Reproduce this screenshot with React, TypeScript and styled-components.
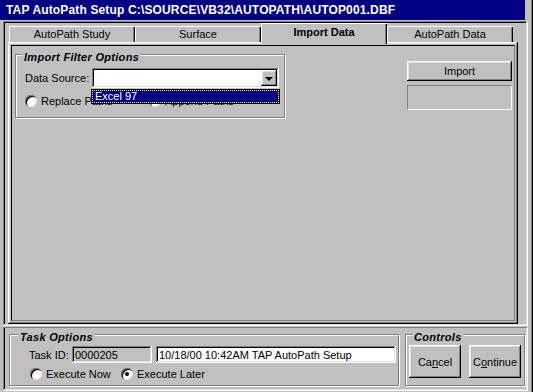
import React from 'react';
import styled, { createGlobalStyle, css } from 'styled-components';

const GlobalStyle = createGlobalStyle`
  html, body {
    margin: 0;
    padding: 0;
    background: #c0c0c0;
  }
  body {
    font-family: "Liberation Sans", Arial, sans-serif;
    font-size: 11px;
    color: #000;
  }
`;

const raised = css`
  box-shadow: inset -1px -1px #000, inset 1px 1px #fff, inset -2px -2px #808080, inset 2px 2px #dfdfdf;
`;

const sunken = css`
  box-shadow: inset -1px -1px #fff, inset 1px 1px #808080, inset -2px -2px #dfdfdf, inset 2px 2px #000;
`;

const Window = styled.div`
  width: 533px;
  height: 392px;
  box-sizing: border-box;
  padding-right: 5px;
  display: flex;
  flex-direction: column;
  background: #c0c0c0;
  box-shadow: inset -1px 0 #000, inset -2px 0 #808080;
  overflow: hidden;
`;

const TitleBar = styled.div`
  height: 20px;
  margin-right: 3px;
  padding-left: 6px;
  background: #000080;
  color: #fff;
  font-weight: bold;
  font-size: 12px;
  letter-spacing: 0.15px;
  line-height: 21px;
  white-space: nowrap;
`;

const MainFrame = styled.div`
  margin: 1px 0 0 3px;
  height: 305px;
  box-sizing: border-box;
  padding: 2px 10px 2px 5px;
  display: flex;
  flex-direction: column;
  ${sunken}
`;

const TabRow = styled.div`
  display: flex;
  height: 19px;
  padding-left: 1px;
  align-items: flex-end;
`;

const Tab = styled.div<{ $active?: boolean }>`
  width: 126px;
  height: ${({ $active }) => ($active ? '21px' : '16px')};
  margin-bottom: ${({ $active }) => ($active ? '-2px' : '0')};
  position: relative;
  z-index: ${({ $active }) => ($active ? 1 : 0)};
  box-sizing: border-box;
  background: #c0c0c0;
  display: flex;
  align-items: center;
  justify-content: center;
  padding-bottom: ${({ $active }) => ($active ? '3px' : '0')};
  font-weight: ${({ $active }) => ($active ? 'bold' : 'normal')};
  font-size: 11px;
  box-shadow: inset 1px 1px #fff, inset -1px 0 #000, inset -2px 0 #808080;
`;

const TabPanel = styled.div`
  flex: 1;
  box-sizing: border-box;
  padding: 2px;
  display: flex;
  ${raised}
`;

const Content = styled.div`
  flex: 1;
  margin: 1px;
  border: 1px solid;
  border-color: #000 #808080 #808080 #000;
  display: flex;
  align-items: flex-start;
`;

const Group = styled.fieldset<{ $width: number; $height: number }>`
  margin: 0;
  padding: 0;
  width: ${({ $width }) => $width}px;
  height: ${({ $height }) => $height}px;
  box-sizing: border-box;
  border: 1px solid #808080;
  box-shadow: inset 1px 1px #fff, 1px 1px #fff;
  min-inline-size: 0;
`;

const Legend = styled.legend<{ $indent?: number }>`
  margin-left: ${({ $indent }) => $indent ?? 6}px;
  padding: 0 2px;
  background: #c0c0c0;
  font-weight: 900;
  font-style: italic;
  font-size: 11px;
  letter-spacing: 0.3px;
  line-height: 14px;
  position: relative;
  top: 3px;
`;

const GroupBody = styled.div<{ $pad: string; $row?: boolean; $gap?: number }>`
  padding: ${({ $pad }) => $pad};
  display: flex;
  flex-direction: ${({ $row }) => ($row ? 'row' : 'column')};
  gap: ${({ $gap }) => $gap ?? 0}px;
`;

const Row = styled.div<{ $top?: number; $left?: number }>`
  display: flex;
  align-items: center;
  margin-top: ${({ $top }) => $top ?? 0}px;
  margin-left: ${({ $left }) => $left ?? 0}px;
`;

const FieldLabel = styled.span<{ $width: number }>`
  width: ${({ $width }) => $width}px;
  white-space: nowrap;
`;

const Combo = styled.div`
  position: relative;
  width: 187px;
  height: 20px;
  box-sizing: border-box;
  background: #fff;
  display: flex;
  justify-content: flex-end;
  align-items: center;
  padding-right: 2px;
  ${sunken}
`;

const DropButton = styled.div`
  width: 16px;
  height: 16px;
  background: #c0c0c0;
  display: flex;
  align-items: center;
  justify-content: center;
  ${raised}
`;

const Arrow = styled.span`
  width: 0;
  height: 0;
  border-left: 4px solid transparent;
  border-right: 4px solid transparent;
  border-top: 4px solid #000;
  margin-top: 1px;
`;

const DropList = styled.div`
  position: absolute;
  top: 21px;
  left: -1px;
  width: 189px;
  height: 15px;
  box-sizing: border-box;
  border: 1px solid #000;
  background: #000080;
  z-index: 2;
`;

const DropItem = styled.div`
  height: 13px;
  box-sizing: border-box;
  outline: 1px dotted #ffff80;
  outline-offset: -1px;
  color: #fff;
  padding-left: 3px;
  line-height: 13px;
  font-size: 11px;
`;

const RadioItem = styled.label<{ $width?: number }>`
  display: flex;
  align-items: center;
  gap: 4px;
  width: ${({ $width }) => ($width ? `${$width}px` : 'auto')};
  white-space: nowrap;
`;

const RadioCircle = styled.span<{ $checked?: boolean }>`
  width: 12px;
  height: 12px;
  border-radius: 50%;
  background: #fff;
  flex: none;
  position: relative;
  box-shadow: inset 1px 1px 0 #808080, inset 2px 2px 0 #000, inset -1px -1px 0 #dfdfdf;
  &::after {
    content: '';
    display: ${({ $checked }) => ($checked ? 'block' : 'none')};
    position: absolute;
    left: 4px;
    top: 4px;
    width: 4px;
    height: 4px;
    border-radius: 50%;
    background: #000;
  }
`;

const RightCol = styled.div`
  margin: 15px 2px 0 auto;
  width: 105px;
  display: flex;
  flex-direction: column;
  gap: 4px;
`;

const Button = styled.button<{ $width: number; $height: number }>`
  width: ${({ $width }) => $width}px;
  height: ${({ $height }) => $height}px;
  border: none;
  padding: 0;
  background: #c0c0c0;
  font-family: "Liberation Sans", Arial, sans-serif;
  font-size: 11px;
  color: #000;
  ${raised}
`;

const StatusBox = styled.div`
  height: 25px;
  border: 1px solid;
  border-color: #808080 #fff #fff #808080;
  box-sizing: border-box;
`;

const BottomFrame = styled.div`
  margin: 1px 0 1px 3px;
  flex: 1;
  box-sizing: border-box;
  padding: 0 3px 0 6px;
  display: flex;
  gap: 6px;
  box-shadow: inset -1px -1px #fff, inset 1px 1px #808080, inset -2px -2px #dfdfdf, inset 2px 0 #000;
`;

const TextBox = styled.div<{ $width: number; $bg: string }>`
  width: ${({ $width }) => $width}px;
  height: 17px;
  box-sizing: border-box;
  background: ${({ $bg }) => $bg};
  padding: 2px 3px 0;
  font-size: 11px;
  line-height: 14px;
  white-space: nowrap;
  overflow: hidden;
  ${sunken}
`;

const Spacer = styled.span<{ $width: number }>`
  width: ${({ $width }) => $width}px;
  flex: none;
`;

export default function App() {
  return (
    <>
      <GlobalStyle />
      <Window>
        <TitleBar>TAP AutoPath Setup C:\SOURCE\VB32\AUTOPATH\AUTOP001.DBF</TitleBar>
        <MainFrame>
          <TabRow>
            <Tab>AutoPath Study</Tab>
            <Tab>Surface</Tab>
            <Tab $active>Import Data</Tab>
            <Tab>AutoPath Data</Tab>
          </TabRow>
          <TabPanel>
            <Content>
              <Group $width={270} $height={71} style={{ margin: '1px 0 0 3px' }}>
                <Legend>Import Filter Options</Legend>
                <GroupBody $pad="7px 0 0 9px">
                  <Row>
                    <FieldLabel $width={67}>Data Source:</FieldLabel>
                    <Combo>
                      <DropButton>
                        <Arrow />
                      </DropButton>
                      <DropList>
                        <DropItem>Excel 97</DropItem>
                      </DropList>
                    </Combo>
                  </Row>
                  <Row $top={7}>
                    <RadioItem $width={124}>
                      <RadioCircle />
                      Replace Paths
                    </RadioItem>
                    <RadioItem>
                      <RadioCircle />
                      Append Paths
                    </RadioItem>
                  </Row>
                </GroupBody>
              </Group>
              <RightCol>
                <Button $width={105} $height={20}>Import</Button>
                <StatusBox />
              </RightCol>
            </Content>
          </TabPanel>
        </MainFrame>
        <BottomFrame>
          <Group $width={390} $height={59}>
            <Legend $indent={8}>Task Options</Legend>
            <GroupBody $pad="5px 0 0 19px">
              <Row>
                <FieldLabel $width={43}>Task ID:</FieldLabel>
                <TextBox $width={80} $bg="#c0c0c0">0000205</TextBox>
                <Spacer $width={4} />
                <TextBox $width={240} $bg="#fff">10/18/00 10:42AM TAP AutoPath Setup</TextBox>
              </Row>
              <Row $top={5} $left={1}>
                <RadioItem $width={91}>
                  <RadioCircle />
                  Execute Now
                </RadioItem>
                <RadioItem>
                  <RadioCircle $checked />
                  Execute Later
                </RadioItem>
              </Row>
            </GroupBody>
          </Group>
          <Group $width={120} $height={59}>
            <Legend>Controls</Legend>
            <GroupBody $pad="4px 0 0 3px" $row $gap={8}>
              <Button $width={52} $height={33}>
                Ca<u>n</u>cel
              </Button>
              <Button $width={52} $height={33}>
                C<u>o</u>ntinue
              </Button>
            </GroupBody>
          </Group>
        </BottomFrame>
      </Window>
    </>
  );
}
